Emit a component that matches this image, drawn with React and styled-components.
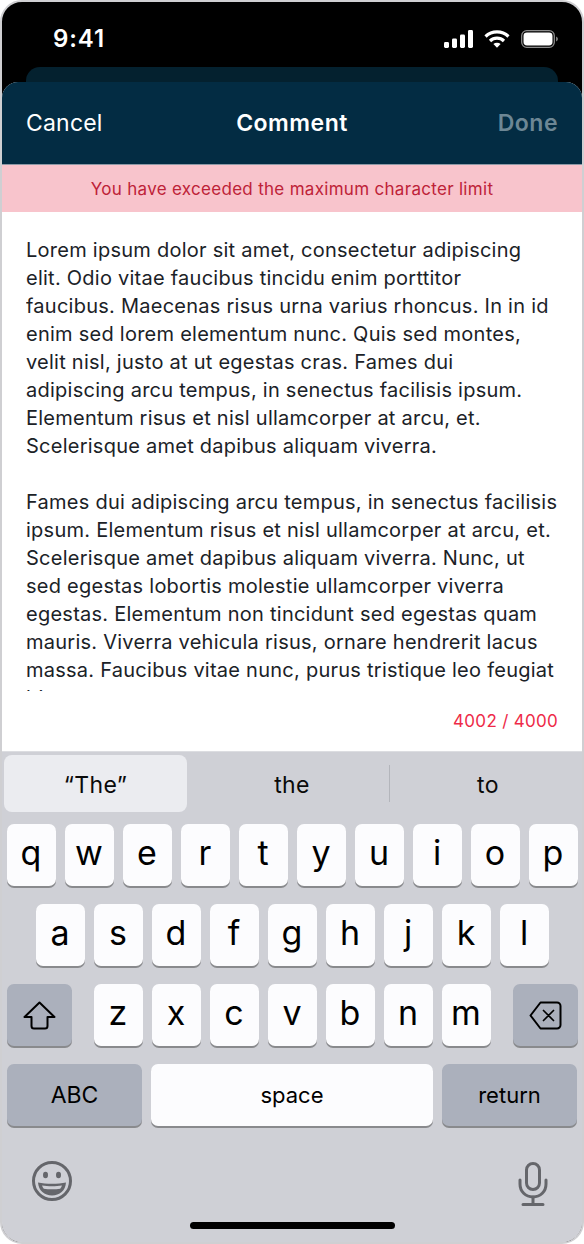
import React from 'react';
import styled, { createGlobalStyle } from 'styled-components';

const GlobalStyle = createGlobalStyle`
  html, body {
    margin: 0;
    padding: 0;
    background: #ffffff;
  }
  * {
    box-sizing: border-box;
  }
`;

const Phone = styled.div`
  width: 584px;
  height: 1244px;
  border: 2px solid #cfcfd2;
  border-radius: 22px;
  overflow: hidden;
  display: flex;
  flex-direction: column;
  background: #000000;
  font-family: Inter, 'Liberation Sans', sans-serif;
`;

const StatusBar = styled.div`
  height: 65px;
  flex: none;
  display: flex;
  align-items: flex-start;
  justify-content: space-between;
  padding: 21px 24px 0 51px;
`;

const Clock = styled.span`
  color: #ffffff;
  font-size: 24px;
  line-height: 32px;
  font-weight: 600;
  letter-spacing: 0.9px;
`;

const StatusIcons = styled.div`
  display: flex;
  align-items: center;
  gap: 11px;
  height: 32px;
`;

const BackCard = styled.div`
  height: 15px;
  flex: none;
  margin: 0 24px;
  background: #04212f;
  border-radius: 14px 14px 0 0;
`;

const Sheet = styled.div`
  flex: 1;
  min-height: 0;
  display: flex;
  flex-direction: column;
  background: #ffffff;
  border-radius: 16px 16px 0 0;
  overflow: hidden;
`;

const NavBar = styled.header`
  height: 83px;
  flex: none;
  display: grid;
  grid-template-columns: 1fr auto 1fr;
  align-items: center;
  padding: 0 24px;
  background: #032c43;
  border-bottom: 1px solid #8d99a6;
`;

const NavAction = styled.span`
  font-size: 23px;
  line-height: 28px;
  font-weight: ${props => (props.$muted ? 600 : 400)};
  letter-spacing: ${props => (props.$muted ? 0.5 : 0.2)}px;
  color: ${props => (props.$muted ? '#6d8795' : '#ffffff')};
  text-align: ${props => (props.$muted ? 'right' : 'left')};
`;

const NavTitle = styled.span`
  font-size: 23px;
  line-height: 28px;
  font-weight: 600;
  letter-spacing: 0.5px;
  color: #ffffff;
`;

const Banner = styled.div`
  height: 47px;
  flex: none;
  display: flex;
  align-items: center;
  justify-content: center;
  background: #f8c4cc;
  color: #be2238;
  font-size: 17px;
  line-height: 20px;
  letter-spacing: 0.3px;
`;

const Editor = styled.main`
  height: 539px;
  flex: none;
  display: flex;
  flex-direction: column;
  padding: 24px 24px 0;
  background: #ffffff;
`;

const CommentText = styled.div`
  height: 455px;
  flex: none;
  overflow: hidden;
  font-size: 20px;
  line-height: 28px;
  letter-spacing: 0.25px;
  color: #1b2227;
`;

const Paragraph = styled.p`
  margin: 0 0 28px;
`;

const TextLine = styled.span`
  display: block;
  white-space: nowrap;
`;

const Counter = styled.div`
  margin-top: 20px;
  text-align: right;
  font-size: 17px;
  line-height: 20px;
  letter-spacing: 0.3px;
  color: #ee2a48;
`;

const Keyboard = styled.section`
  flex: 1;
  min-height: 0;
  display: flex;
  flex-direction: column;
  background: #cfd0d6;
  border-top: 1px solid #dcdde1;
  padding: 3px 4.5px 0;
`;

const Suggestions = styled.div`
  height: 57px;
  flex: none;
  display: grid;
  grid-template-columns: 190px 196px 196px;
  margin-left: -2.5px;
`;

const Suggestion = styled.div`
  display: flex;
  align-items: center;
  justify-content: center;
  padding-top: 2px;
  font-size: 23px;
  letter-spacing: 0.4px;
  color: #0a0a0a;
  border-radius: 8px;
  background: ${props => (props.$active ? '#ebecf0' : 'transparent')};
  margin-right: ${props => (props.$active ? 7 : 0)}px;
  position: relative;

  ${props => props.$divided && `
    &::after {
      content: '';
      position: absolute;
      right: 0;
      top: 10px;
      bottom: 10px;
      width: 1px;
      background: #b3b5bb;
    }
  `}
`;

const KeyRows = styled.div`
  display: flex;
  flex-direction: column;
  gap: 18px;
  margin-top: 12px;
`;

const KeyRow = styled.div`
  display: flex;
  justify-content: ${props => (props.$spread ? 'space-between' : 'center')};
  gap: 9px;
`;

const LetterGroup = styled.div`
  display: flex;
  gap: 9px;
`;

const Key = styled.div`
  width: ${props => props.$width || 49}px;
  height: 62px;
  flex: none;
  display: flex;
  align-items: center;
  justify-content: center;
  border-radius: 7px;
  background: ${props => (props.$dark ? '#abb0bc' : '#fcfcfe')};
  box-shadow: 0 2px 0 #898a8d;
  color: #000000;
  font-size: ${props => props.$size || 34}px;
  line-height: 1;
  padding-bottom: ${props => (props.$size ? 0 : 5)}px;
`;

const KeyboardFooter = styled.div`
  flex: 1;
  position: relative;
  display: flex;
  justify-content: space-between;
  align-items: flex-start;
  padding: 34px 30px 0 24px;
`;

const HomeBar = styled.div`
  position: absolute;
  left: 183px;
  bottom: 13px;
  width: 205px;
  height: 7px;
  border-radius: 4px;
  background: #000000;
`;

const MicSvg = styled.svg`
  margin-top: 2px;
`;

const Signal = () => (
  <svg width="29" height="18" viewBox="0 0 29 18" fill="#fff">
    <rect x="0" y="12" width="5" height="6" rx="1.4" />
    <rect x="8" y="8.5" width="5" height="9.5" rx="1.4" />
    <rect x="16" y="4.5" width="5" height="13.5" rx="1.4" />
    <rect x="24" y="0" width="5" height="18" rx="1.4" />
  </svg>
);

const Wifi = () => (
  <svg width="26" height="18" viewBox="0 0 26 18" fill="none" stroke="#fff" strokeWidth="3.2">
    <path d="M1.5 6.5C8 .3 18 .3 24.500 6.500" />
    <path d="M6 11c4-3.800 10-3.800 14 0" />
    <path d="M13 17.800l-3.600-3.800c2-1.700 5.200-1.700 7.200 0z" fill="#fff" stroke="none" />
  </svg>
);

const Battery = () => (
  <svg width="37" height="18" viewBox="0 0 37 18">
    <rect x="0.700" y="0.700" width="32.600" height="16.600" rx="5" fill="none" stroke="#8b8b8b" strokeWidth="1.300" />
    <rect x="2.500" y="2.500" width="29" height="13" rx="3.400" fill="#fff" />
    <path d="M35 6.500c1.200.4 2 1.400 2 2.500s-.8 2.100-2 2.500z" fill="#777" />
  </svg>
);

const ShiftIcon = () => (
  <svg width="33" height="29" viewBox="0 0 33 29" fill="none" stroke="#000" strokeWidth="2" strokeLinejoin="round">
    <path d="M16.500 1.500 1.500 16h7V25a2.500 2.500 0 0 0 2.500 2.500h11a2.500 2.500 0 0 0 2.500-2.500V16h7z" />
  </svg>
);

const DeleteIcon = () => (
  <svg width="33" height="29" viewBox="0 0 33 29" fill="none" stroke="#000" strokeWidth="2" strokeLinejoin="round" strokeLinecap="round">
    <path d="M11.500 1.500H28a3.500 3.500 0 0 1 3.500 3.500v19a3.500 3.500 0 0 1-3.500 3.500H11.500L1.500 14.500z" />
    <path d="M14.500 9.500l10 10M24.500 9.500l-10 10" strokeWidth="1.700" />
  </svg>
);

const EmojiIcon = () => (
  <svg width="42" height="42" viewBox="0 0 42 42" fill="none">
    <circle cx="21" cy="21" r="18.500" stroke="#65666b" strokeWidth="3" />
    <ellipse cx="14.500" cy="15" rx="2.500" ry="3.200" fill="#65666b" />
    <ellipse cx="27.500" cy="15" rx="2.500" ry="3.200" fill="#65666b" />
    <path d="M7 22.500c8 1.800 20 1.800 28 0-.5 8-6.500 13-14 13s-13.500-5-14-13z" fill="#65666b" />
    <path d="M11 25.500c6 1 14 1 20 0-.4 1.300-1 2.300-1.800 3.200-5 .7-11.400.7-16.400 0-.8-.9-1.400-1.900-1.800-3.200z" fill="#cfd0d6" />
  </svg>
);

const MicIcon = () => (
  <MicSvg width="30" height="44" viewBox="0 0 30 44" fill="none" stroke="#65666b" strokeWidth="3" strokeLinecap="round">
    <rect x="8.500" y="1.500" width="13" height="26" rx="6.500" />
    <path d="M2 18v4c0 7.500 5.500 13 13 13s13-5.500 13-13v-4" />
    <path d="M15 35v7M5 42.500h20" />
  </MicSvg>
);

const rowOne = ['q', 'w', 'e', 'r', 't', 'y', 'u', 'i', 'o', 'p'];
const rowTwo = ['a', 's', 'd', 'f', 'g', 'h', 'j', 'k', 'l'];
const rowThree = ['z', 'x', 'c', 'v', 'b', 'n', 'm'];

const paragraphs = [
  [
    'Lorem ipsum dolor sit amet, consectetur adipiscing',
    'elit. Odio vitae faucibus tincidu enim porttitor',
    'faucibus. Maecenas risus urna varius rhoncus. In in id',
    'enim sed lorem elementum nunc. Quis sed montes,',
    'velit nisl, justo at ut egestas cras. Fames dui',
    'adipiscing arcu tempus, in senectus facilisis ipsum.',
    'Elementum risus et nisl ullamcorper at arcu, et.',
    'Scelerisque amet dapibus aliquam viverra.',
  ],
  [
    'Fames dui adipiscing arcu tempus, in senectus facilisis',
    'ipsum. Elementum risus et nisl ullamcorper at arcu, et.',
    'Scelerisque amet dapibus aliquam viverra. Nunc, ut',
    'sed egestas lobortis molestie ullamcorper viverra',
    'egestas. Elementum non tincidunt sed egestas quam',
    'mauris. Viverra vehicula risus, ornare hendrerit lacus',
    'massa. Faucibus vitae nunc, purus tristique leo feugiat',
    'bi',
  ],
];

function App() {
  return (
    <Phone>
      <GlobalStyle />
      <StatusBar>
        <Clock>9:41</Clock>
        <StatusIcons>
          <Signal />
          <Wifi />
          <Battery />
        </StatusIcons>
      </StatusBar>
      <BackCard />
      <Sheet>
        <NavBar>
          <NavAction>Cancel</NavAction>
          <NavTitle>Comment</NavTitle>
          <NavAction $muted>Done</NavAction>
        </NavBar>
        <Banner>You have exceeded the maximum character limit</Banner>
        <Editor>
          <CommentText>
            {paragraphs.map(lines => (
              <Paragraph key={lines[0]}>
                {lines.map(line => <TextLine key={line}>{line}</TextLine>)}
              </Paragraph>
            ))}
          </CommentText>
          <Counter>4002 / 4000</Counter>
        </Editor>
        <Keyboard>
          <Suggestions>
            <Suggestion $active>“The”</Suggestion>
            <Suggestion $divided>the</Suggestion>
            <Suggestion>to</Suggestion>
          </Suggestions>
          <KeyRows>
            <KeyRow>
              {rowOne.map(letter => <Key key={letter}>{letter}</Key>)}
            </KeyRow>
            <KeyRow>
              {rowTwo.map(letter => <Key key={letter}>{letter}</Key>)}
            </KeyRow>
            <KeyRow $spread>
              <Key $dark $width={65} $size={20}><ShiftIcon /></Key>
              <LetterGroup>
                {rowThree.map(letter => <Key key={letter}>{letter}</Key>)}
              </LetterGroup>
              <Key $dark $width={65} $size={20}><DeleteIcon /></Key>
            </KeyRow>
            <KeyRow>
              <Key $dark $width={135} $size={23}>ABC</Key>
              <Key $width={282} $size={22}>space</Key>
              <Key $dark $width={135} $size={22}>return</Key>
            </KeyRow>
          </KeyRows>
          <KeyboardFooter>
            <EmojiIcon />
            <MicIcon />
            <HomeBar />
          </KeyboardFooter>
        </Keyboard>
      </Sheet>
    </Phone>
  );
}

export default App;
